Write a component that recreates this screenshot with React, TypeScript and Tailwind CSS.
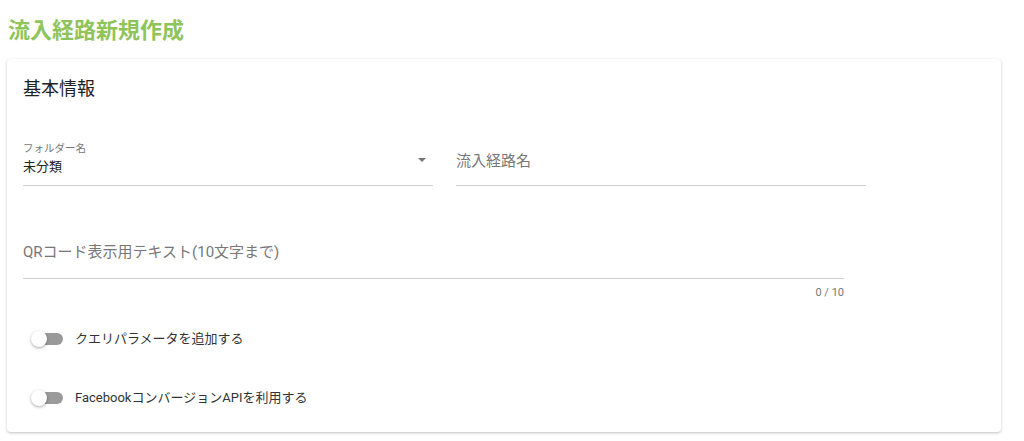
const font = { fontFamily: 'Roboto, "Noto Sans CJK JP", sans-serif' };

function Toggle({ label }: { label: string }) {
  return (
    <div className="flex h-5 items-center">
      <div className="relative ml-2 h-4 w-8">
        <div className="absolute left-1 top-[2px] h-3 w-7 rounded-full bg-[#9a9a9a]" />
        <div className="absolute left-0 top-0 h-4 w-4 rounded-full bg-white shadow-[0_1px_3px_rgba(0,0,0,0.35)]" />
      </div>
      <span className="ml-3 text-[13px] leading-5 text-[#333]">{label}</span>
    </div>
  );
}

export default function App() {
  return (
    <div className="min-h-[441px] bg-white" style={font}>
      <h1 className="pl-2 pt-4 text-[22px] font-bold leading-[30px] text-[#8fc45a]">流入経路新規作成</h1>

      <section className="ml-[7px] mt-[13px] w-[994px] rounded-[4px] bg-white px-4 pb-6 pt-4 shadow-[0_1px_3px_rgba(0,0,0,0.25)]">
        <h2 className="h-7 text-[18px] leading-7 text-[#222]">基本情報</h2>

        <div className="mt-[38px] flex gap-[23px]">
          <div className="w-[410px] border-b border-[#cfcfcf] pb-2">
            <div className="flex items-center">
              <div className="flex-1">
                <div className="h-4 text-[10.5px] leading-4 text-[#777]">フォルダー名</div>
                <div className="h-5 text-[13px] leading-5 text-[#222]">未分類</div>
              </div>
              <svg width="8" height="4" viewBox="0 0 8 4" className="mr-[7px] mt-[2px]">
                <path d="M0 0h8L4 4z" fill="#757575" />
              </svg>
            </div>
          </div>
          <div className="h-[45px] w-[410px] border-b border-[#cfcfcf] pt-2">
            <span className="text-[15px] leading-5 text-[#777]">流入経路名</span>
          </div>
        </div>

        <div className="mt-[56px] w-[821px]">
          <div className="border-b border-[#cfcfcf] pb-4 text-[15px] leading-5 text-[#777]">
            QRコード表示用テキスト(10文字まで)
          </div>
          <div className="mt-[7px] text-right text-[11px] leading-[14px] text-[#777]">0 / 10</div>
        </div>

        <div className="mt-[29px]">
          <Toggle label="クエリパラメータを追加する" />
        </div>
        <div className="mt-[39px]">
          <Toggle label="FacebookコンバージョンAPIを利用する" />
        </div>
      </section>
    </div>
  );
}
